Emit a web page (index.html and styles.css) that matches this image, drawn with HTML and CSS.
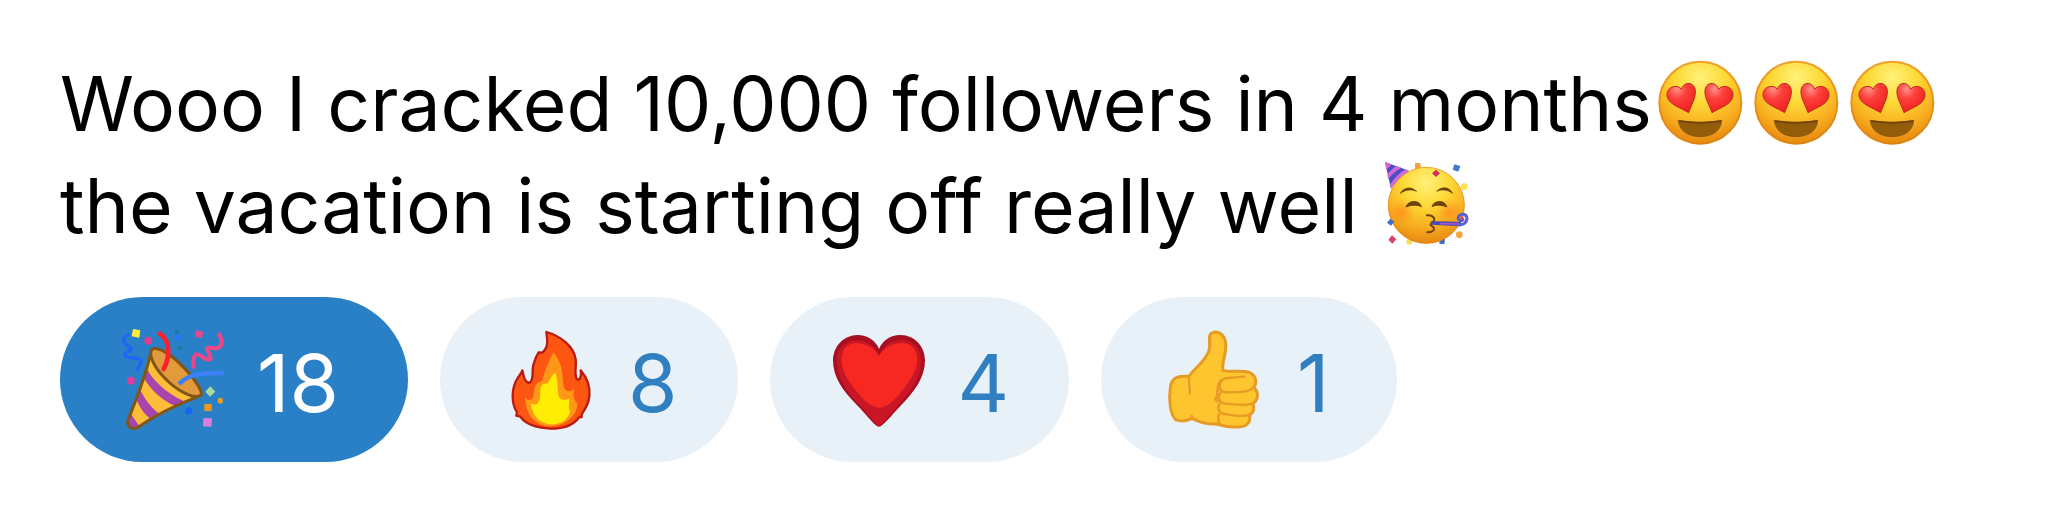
FILE: index.html
```html
<!DOCTYPE html>
<html lang="en">
<head>
    <meta charset="UTF-8">
    <meta name="viewport" content="width=device-width, initial-scale=1.0">
    <title>Message</title>
    <link rel="stylesheet" href="styles.css">
</head>
<body>
    <!-- shared emoji artwork -->
    <svg class="defs" width="0" height="0" aria-hidden="true">
        <defs>
            <radialGradient id="face" cx="0.5" cy="0.2" r="0.78">
                <stop offset="0" stop-color="#fff27a"/>
                <stop offset="0.4" stop-color="#fdd835"/>
                <stop offset="0.75" stop-color="#f8ae20"/>
                <stop offset="1" stop-color="#e88b12"/>
            </radialGradient>
            <linearGradient id="rim" x1="0" y1="0" x2="0" y2="1">
                <stop offset="0" stop-color="#f0a022"/>
                <stop offset="1" stop-color="#dc8410"/>
            </linearGradient>
            <radialGradient id="eye" cx="0.35" cy="0.2" r="0.8">
                <stop offset="0" stop-color="#ff8f8a"/>
                <stop offset="0.4" stop-color="#fb423b"/>
                <stop offset="1" stop-color="#f0201f"/>
            </radialGradient>
            <radialGradient id="blush">
                <stop offset="0" stop-color="#ff7a1c" stop-opacity="0.6"/>
                <stop offset="1" stop-color="#ff8a1c" stop-opacity="0"/>
            </radialGradient>
            <symbol id="heart-eyes" viewBox="21 15 288 288">
                <circle cx="166" cy="158" r="123" fill="url(#face)" stroke="url(#rim)" stroke-width="6"/>
                <path d="M131 188C109 174 69 163 66 137C64 112 94 100 109 117C117 93 149 95 151 122C153 144 138 166 131 188Z" fill="url(#eye)" stroke="#b92a1b" stroke-width="3"/>
                <path d="M201 188C223 174 262 163 264 137C266 112 237 100 221 117C213 93 182 95 180 122C178 144 194 166 201 188Z" fill="url(#eye)" stroke="#b92a1b" stroke-width="3"/>
                <path d="M100 211C143 218 189 218 230 211C228 243 202 260 165 260C128 260 102 241 100 211Z" fill="#935c0b" stroke="#7d4b08" stroke-width="2"/>
                <path d="M101 213C143 220 188 220 229 213" fill="none" stroke="#6d3f05" stroke-width="4"/>
            </symbol>
        </defs>
    </svg>

    <main class="post">
        <p class="message">
            Wooo I cracked 10,000 followers in 4 months<svg class="emoji" role="img" aria-label="heart eyes"><use href="#heart-eyes"/></svg><svg class="emoji" role="img" aria-label="heart eyes"><use href="#heart-eyes"/></svg><svg class="emoji" role="img" aria-label="heart eyes"><use href="#heart-eyes"/></svg><br>
            the vacation is starting off really well
            <svg class="emoji" viewBox="30 21 288 288" role="img" aria-label="partying face">
                <rect x="138" y="39" width="17" height="20" rx="3" fill="#f2a33a"/>
                <path d="M212 268L228 266L226 283L211 281Z" fill="#3c6fc9"/>
                <circle cx="121" cy="275" r="9" fill="#fbdc55"/>
                <circle cx="172" cy="166" r="114" fill="url(#face)" stroke="url(#rim)" stroke-width="3"/>
                <circle cx="98" cy="187" r="40" fill="url(#blush)"/>
                <circle cx="242" cy="187" r="40" fill="url(#blush)"/>
                <path d="M48 36L120 62C99 74 80 92 66 116Z" fill="#4a50c4"/>
                <path d="M48 36L68 43L52 60ZM83 48L97 53C82 62 66 75 57 88L55 73C62 64 72 55 83 48ZM110 58L120 62C99 74 80 92 66 116L63 104C74 86 91 69 110 58Z" fill="#d568d6"/>
                <path d="M94 130C103 111 126 108 143 124C126 117 109 119 94 130ZM203 124C219 107 242 111 251 130C236 119 219 117 203 124Z" fill="#6d4308" stroke="#6d4308" stroke-width="2"/>
                <path d="M111 171C116 150 153 149 157 170C144 164 126 164 111 171ZM189 170C195 149 230 150 233 171C219 164 202 164 189 170Z" fill="#6d4308" stroke="#6d4308" stroke-width="3"/>
                <path d="M174 196C190 194 204 206 190 218C184 222 182 226 190 229C202 236 192 248 175 247" fill="none" stroke="#70420c" stroke-width="6" stroke-linecap="round"/>
                <path d="M186 213L276 216L276 229L186 224Z" fill="#5148b8"/>
                <path d="M268 224C283 227 294 217 294 205C293 192 276 188 269 199C264 210 276 217 282 208" fill="none" stroke="#5960d1" stroke-width="9" stroke-linecap="round"/>
                <path d="M213 221L270 222" stroke="#a05bc8" stroke-width="5"/>
                <circle cx="279" cy="204" r="5" fill="#d54772"/>
                <path d="M201 59L213 70L201 81L189 70Z" fill="#d22f5c"/>
                <path d="M256 43L274 48L268 65L251 59Z" fill="#4678cd"/>
                <circle cx="285" cy="110" r="10" fill="#ffe04d"/>
                <path d="M64 206L76 215L66 227L54 218Z" fill="#3f72c8"/>
                <path d="M69 256L82 268L70 281L58 269Z" fill="#da426e"/>
                <circle cx="271" cy="254" r="10" fill="#f3a43c"/>
            </svg>
        </p>

        <div class="reactions">
            <button type="button" class="reaction active" aria-label="Party popper, 18" aria-pressed="true">
                <svg class="icon" viewBox="30 24 312 312" aria-hidden="true">
                    <path d="M122 90C112 150 82 230 54 300C50 320 66 331 84 322C150 278 215 250 270 228Z" fill="#fdbd38"/>
                    <path d="M110 145C130 186 182 228 228 246L198 259C156 243 119 206 100 172ZM88 205C103 236 124 266 151 283L125 298C103 283 86 259 78 233ZM63 282L88 319C72 332 48 318 55 298Z" fill="#a845ad"/>
                    <path d="M124 91C137 74 183 103 216 137C254 176 284 220 271 227C251 238 203 214 164 174C132 142 116 105 124 91Z" fill="#e19a3c"/>
                    <path d="M124 91C137 74 183 103 216 137C254 176 284 220 271 227C251 238 203 214 164 174C132 142 116 105 124 91ZM124 91C111 154 84 226 54 300C50 320 66 331 84 322C148 277 211 250 271 227" fill="none" stroke="#845615" stroke-width="9" stroke-linejoin="round"/>
                    <path d="M150 41C182 61 180 112 161 147" fill="none" stroke="#fb202c" stroke-width="14" stroke-linecap="round"/>
                    <path d="M207 192C240 158 287 159 342 159" fill="none" stroke="#3b82fa" stroke-width="13"/>
                    <path d="M59 41C29 57 41 71 61 83C75 92 31 96 48 109C62 119 88 109 93 122C95 132 84 141 80 151" fill="none" stroke="#1f66f4" stroke-width="10"/>
                    <path d="M325 39C338 60 340 78 322 84C308 89 289 76 292 89C297 103 310 118 296 119C280 118 266 97 257 104C247 111 251 130 250 146" fill="none" stroke="#eb4888" stroke-width="12"/>
                    <path d="M69 27L91 31L88 53L65 49Z" fill="#ffeb3b"/>
                    <path d="M259 31L280 35L275 55L255 50Z" fill="#ea478c"/>
                    <path d="M301 199L316 215L300 230L286 215Z" fill="#a9dc9a"/>
                    <rect x="283" y="252" width="22" height="21" fill="#f59713"/>
                    <path d="M280 294L306 295L304 320L279 319Z" fill="#de7ddd"/>
                    <circle cx="115" cy="62" r="12" fill="#df3d91"/>
                    <circle cx="63" cy="182" r="12" fill="#df3d9c"/>
                    <circle cx="236" cy="273" r="11" fill="#1765f3"/>
                    <circle cx="202" cy="38" r="8" fill="#167b9c"/>
                    <path d="M205 38C222 47 218 63 205 63C191 60 195 47 205 38Z" fill="#2478f2"/>
                    <circle cx="210" cy="85" r="6" fill="#147d94"/>
                    <ellipse cx="331" cy="242" rx="8" ry="9" fill="#ef9c25"/>
                </svg>
                <span class="count">18</span>
            </button>
            <button type="button" class="reaction" aria-label="Fire, 8" aria-pressed="false">
                <svg class="icon" viewBox="1 24 312 312" aria-hidden="true">
                    <path d="M140 36C183 48 223 80 228 118C231 143 222 164 232 178C242 183 246 164 243 151C260 171 273 195 269 229C267 252 257 267 246 283L246 291L238 292C221 317 190 326 153 326C112 324 78 314 62 290L50 287L52 277C35 252 34 207 53 176C61 164 66 157 68 151C72 170 76 190 90 188C105 178 95 151 102 132C106 115 111 106 117 97L127 98C148 84 143 59 140 36Z" fill="#fc5612" stroke="#b91b12" stroke-width="7" stroke-linejoin="round"/>
                    <path d="M162 97C180 121 188 144 189 174C190 199 194 213 207 214C216 214 223 205 224 206C219 225 222 239 233 250C234 283 203 316 155 319C106 319 76 283 77 231C84 242 91 242 97 237C106 225 100 209 108 196C117 181 125 190 129 178C137 149 149 119 162 97Z" fill="#ff9817"/>
                    <path d="M167 158C177 186 172 214 178 231C185 242 196 241 209 236C208 254 206 265 212 275C202 303 182 312 155 313C119 312 98 287 93 250C105 257 113 254 118 242C126 223 116 207 128 194C134 187 143 195 147 185C154 172 158 164 167 158Z" fill="#ffed06"/>
                </svg>
                <span class="count">8</span>
            </button>
            <button type="button" class="reaction" aria-label="Heart, 4" aria-pressed="false">
                <svg class="icon" viewBox="36 24 312 312" aria-hidden="true">
                    <path d="M183 320C173 321 151 290 116 254C73 211 45 171 45 121C46 76 79 46 118 45C149 45 174 63 183 87C193 63 215 45 248 45C289 46 320 77 321 121C321 171 291 213 252 253C217 290 193 321 183 320Z" fill="#a80f20"/>
                    <path d="M183 319C159 296 133 264 106 235C73 197 54 158 56 118C59 84 83 62 113 61C151 60 173 83 183 108C194 83 216 60 253 61C284 62 307 84 310 118C311 158 292 197 258 236C232 264 207 296 183 319Z" fill="#c91627"/>
                    <path d="M183 264C150 260 126 228 103 198C80 168 64 133 74 98C81 75 103 65 124 70C153 75 174 89 183 108C193 89 214 75 243 70C266 65 290 78 296 103C304 136 285 169 264 198C240 229 216 260 183 264Z" fill="#f72721"/>
                </svg>
                <span class="count">4</span>
            </button>
            <button type="button" class="reaction" aria-label="Thumbs up, 1" aria-pressed="false">
                <svg class="icon" viewBox="27 24 312 312" aria-hidden="true">
                    <g fill="#fec52f" stroke="#e69b25" stroke-width="9" stroke-linecap="round" stroke-linejoin="round">
                        <path d="M111 168C128 145 158 126 171 92C178 69 165 45 180 39C197 31 217 41 221 70C225 98 208 126 213 151C238 158 268 149 292 157C311 166 316 184 306 204C321 216 319 239 303 251C309 267 302 279 292 286C298 301 286 320 265 320C239 323 212 318 193 312C165 314 142 306 119 295C103 304 86 305 71 299C54 282 50 240 55 202C59 171 78 168 111 168Z"/>
                        <path d="M112 170C107 187 116 201 113 220M119 287C119 295 125 297 132 299M278 170C249 174 215 169 207 184C195 214 213 218 232 217C258 215 287 220 305 202M207 217C191 235 205 252 225 251C252 254 283 258 302 250M203 251C193 268 203 282 224 283C248 287 278 291 291 284M201 283C198 293 198 303 203 311M206 181C190 199 203 220 190 238L196 244" fill="none" stroke-width="7"/>
                    </g>
                </svg>
                <span class="count">1</span>
            </button>
        </div>
    </main>
</body>
</html>
```
FILE: styles.css
```css
* {
    box-sizing: border-box;
}
body {
    margin: 0;
    background-color: #fff;
    color: #000;
    font-family: Inter, "Liberation Sans", sans-serif;
}
.defs {
    position: absolute;
}
.post {
    padding: 53px 60px;
}
.message {
    margin: 0 0 40px;
    font-size: 75px;
    line-height: 102px;
}
.emoji {
    width: 96px;
    height: 96px;
    vertical-align: -20px;
}
.reactions {
    display: flex;
    flex-wrap: wrap;
    gap: 32px;
}
.reaction {
    display: flex;
    align-items: center;
    gap: 24px;
    height: 165px;
    padding: 0 60px;
    border: 0;
    border-radius: 83px;
    background-color: #e8f0f8;
    color: #307fc1;
    font-family: inherit;
    font-size: 80px;
    line-height: 96px;
    cursor: pointer;
}
.reaction.active {
    background-color: #2980c6;
    color: #fff;
}
.icon {
    width: 104px;
    height: 104px;
}
.count {
    min-width: 48px;
    padding-top: 6px;
    text-align: center;
}
.active .count {
    min-width: 100px;
}
```
